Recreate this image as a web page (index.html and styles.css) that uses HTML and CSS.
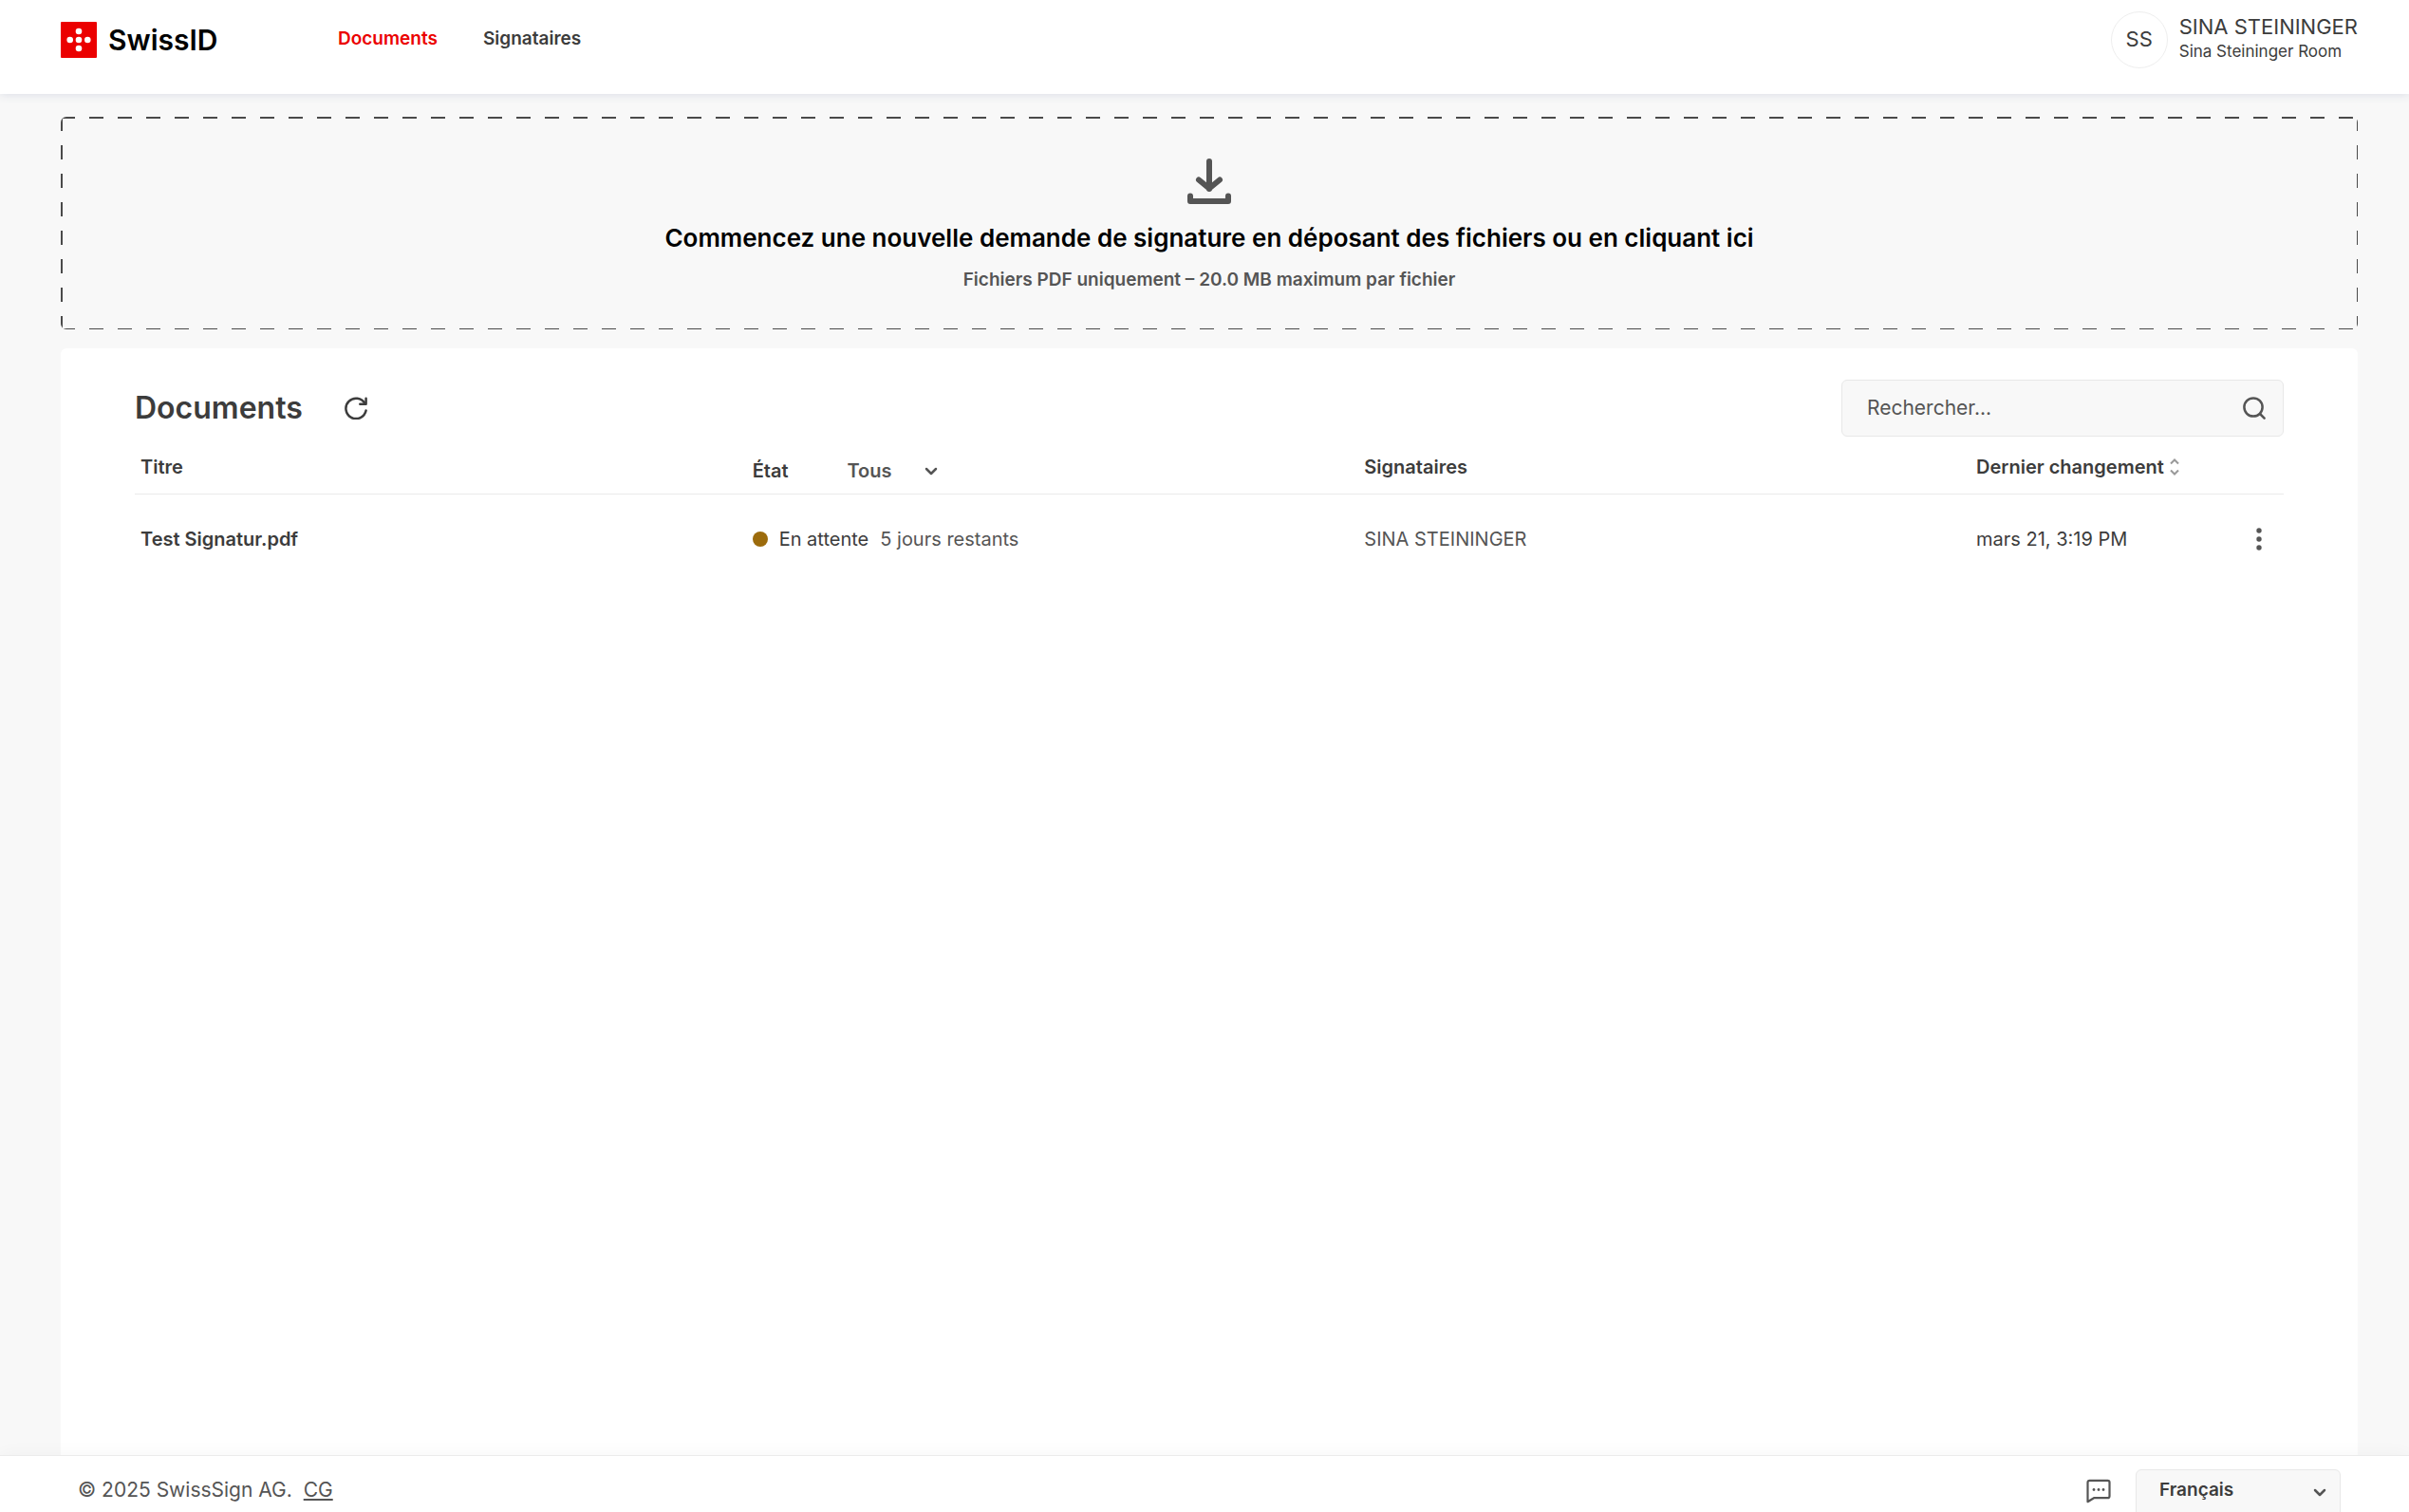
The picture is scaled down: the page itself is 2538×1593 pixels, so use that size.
FILE: index.html
```html
<!DOCTYPE html>
<html lang="fr">
<head>
  <meta charset="UTF-8">
  <meta name="viewport" content="width=device-width, initial-scale=1">
  <title>SwissID Sign</title>
  <link rel="stylesheet" href="styles.css">
</head>
<body>
  <header class="header">
    <a class="logo" href="#">
      <svg width="38" height="38" viewBox="0 0 38 38" aria-hidden="true">
        <rect width="38" height="38" rx="1" fill="#eb0000"/>
        <g fill="#fff">
          <circle cx="19" cy="10" r="3.3"/>
          <circle cx="9.7" cy="19" r="3.3"/>
          <circle cx="19" cy="19" r="3.3"/>
          <circle cx="28.3" cy="19" r="3.3"/>
          <circle cx="19" cy="28" r="3.3"/>
        </g>
      </svg>
      <span>SwissID</span>
    </a>
    <nav class="nav">
      <a class="nav-link active" href="#">Documents</a>
      <a class="nav-link" href="#">Signataires</a>
    </nav>
    <button class="account" type="button">
      <span class="avatar">SS</span>
      <span class="account-text">
        <span class="account-name">SINA STEININGER</span>
        <span class="account-room">Sina Steininger Room</span>
      </span>
    </button>
  </header>

  <main class="main">
    <button class="dropzone" type="button">
      <svg width="46" height="48" viewBox="0 0 46 48" fill="none" stroke="#555" stroke-width="6" stroke-linecap="round" stroke-linejoin="round" aria-hidden="true">
        <path d="M23 3v29"/>
        <path d="M12 22.500l11 9 11-9"/>
        <path d="M3 39.500v5.500h40v-5.500"/>
      </svg>
      <span class="dropzone-title">Commencez une nouvelle demande de signature en déposant des fichiers ou en cliquant ici</span>
      <span class="dropzone-hint">Fichiers PDF uniquement – 20.0 MB maximum par fichier</span>
    </button>

    <section class="card">
      <div class="card-top">
        <h1 class="card-title">Documents</h1>
        <button class="icon-button" type="button" aria-label="Actualiser">
          <svg width="24" height="24" viewBox="0 0 24 24" fill="none" stroke="#3c3c3c" stroke-width="2.500" stroke-linecap="round" stroke-linejoin="round">
            <path d="M22.600 14.500A10.700 10.700 0 1 1 21.500 7.200"/>
            <path d="M22.600 1.800v6h-6.300"/>
          </svg>
        </button>
        <div class="search">
          <input class="search-input" type="search" placeholder="Rechercher..." aria-label="Rechercher">
          <svg width="24" height="24" viewBox="0 0 24 24" fill="none" stroke="#555" stroke-width="2.500" stroke-linecap="round" aria-hidden="true">
            <circle cx="11" cy="11" r="9.600"/>
            <path d="M18 18l4.600 4.600"/>
          </svg>
        </div>
      </div>

      <table class="documents">
        <thead>
          <tr>
            <th>Titre</th>
            <th>
              <div class="status-head">
                <label for="status-filter">État</label>
                <span class="select-box filter">
                  <select id="status-filter">
                    <option>Tous</option>
                  </select>
                  <svg width="14" height="9" viewBox="0 0 14 9" fill="none" stroke="#555" stroke-width="2.500" stroke-linecap="round" stroke-linejoin="round" aria-hidden="true"><path d="M2 2l5 5 5-5"/></svg>
                </span>
              </div>
            </th>
            <th>Signataires</th>
            <th class="last-col">
              <button class="sort" type="button">
                Dernier changement
                <svg width="10" height="18" viewBox="0 0 10 18" fill="none" stroke="#999" stroke-width="2" aria-hidden="true"><path d="M1 5.500l4-4 4 4M1 12.500l4 4 4-4"/></svg>
              </button>
            </th>
          </tr>
        </thead>
        <tbody>
          <tr>
            <td class="doc-name">Test Signatur.pdf</td>
            <td>
              <div class="status">
                <span class="status-dot"></span>
                <span>En attente</span>
                <span class="muted">5 jours restants</span>
              </div>
            </td>
            <td class="muted">SINA STEININGER</td>
            <td>
              <div class="changed">
                <span>mars 21, 3:19 PM</span>
                <button class="icon-button" type="button" aria-label="Actions">
                  <svg width="6" height="24" viewBox="0 0 6 24" fill="#555"><circle cx="3" cy="3" r="2.700"/><circle cx="3" cy="12" r="2.700"/><circle cx="3" cy="21" r="2.700"/></svg>
                </button>
              </div>
            </td>
          </tr>
        </tbody>
      </table>
    </section>
  </main>

  <footer class="footer">
    <p class="copyright">© 2025 SwissSign AG. <a href="#">CG</a></p>
    <button class="icon-button feedback" type="button" aria-label="Feedback">
      <svg width="26" height="26" viewBox="0 0 26 26" fill="none" stroke="#555" stroke-width="2.200" stroke-linejoin="round">
        <path d="M3.500 1.800h19a2 2 0 0 1 2 2v14.400a2 2 0 0 1-2 2H8l-6.500 4V3.800a2 2 0 0 1 2-2z"/>
        <g fill="#555" stroke="none"><circle cx="8" cy="11.500" r="1.400"/><circle cx="13" cy="11.500" r="1.400"/><circle cx="18" cy="11.500" r="1.400"/></g>
      </svg>
    </button>
    <span class="select-box language">
      <select aria-label="Langue">
        <option>Français</option>
      </select>
      <svg width="14" height="9" viewBox="0 0 14 9" fill="none" stroke="#555" stroke-width="2.500" stroke-linecap="round" stroke-linejoin="round" aria-hidden="true"><path d="M2 2l5 5 5-5"/></svg>
    </span>
  </footer>
</body>
</html>
```
FILE: styles.css
```css
* {
  box-sizing: border-box;
}

body {
  margin: 0;
  height: 100vh;
  display: flex;
  flex-direction: column;
  overflow: hidden;
  background: #f8f8f8;
  color: #3c3c3c;
  font-family: Inter, "Open Sans", sans-serif;
  font-size: 20px;
  line-height: 24px;
}

button, input, select {
  font: inherit;
  color: inherit;
  background: none;
  border: 0;
  padding: 0;
  margin: 0;
}

button, select {
  cursor: pointer;
}

svg {
  display: block;
  flex: none;
}

/* header */
.header {
  flex: none;
  height: 99px;
  padding: 12px 54px 0 64px;
  display: flex;
  align-items: flex-start;
  background: white;
  box-shadow: 0 0 10px #d5d8e2;
  z-index: 1;
}

.logo {
  display: flex;
  align-items: center;
  gap: 12px;
  width: 292px;
  height: 60px;
  color: black;
  font-size: 30px;
  font-weight: 600;
  text-decoration: none;
}

.nav {
  display: flex;
  gap: 48px;
  padding-top: 17px;
  font-size: 19px;
}

.nav-link {
  color: inherit;
  font-weight: 600;
  text-decoration: none;
}

.nav-link.active {
  color: #eb0000;
}

.account {
  display: flex;
  align-items: flex-start;
  gap: 12px;
  margin-left: auto;
  text-align: left;
}

.avatar {
  width: 60px;
  height: 60px;
  padding-bottom: 2px;
  display: flex;
  align-items: center;
  justify-content: center;
  border: 1px solid #eee;
  border-radius: 50%;
  font-size: 22px;
}

.account-text {
  display: flex;
  flex-direction: column;
  padding-top: 2px;
}

.account-name {
  font-size: 22px;
  line-height: 28px;
}

.account-room {
  font-size: 17px;
}

/* content */
.main {
  flex: 1;
  min-height: 0;
  padding: 24px 54px 0 64px;
  display: flex;
  flex-direction: column;
  gap: 20px;
}

.dropzone {
  --dash: #4a4a4a 0 15px, transparent 15px 30px;
  flex: none;
  height: 224px;
  padding-top: 4px;
  display: flex;
  flex-direction: column;
  align-items: center;
  justify-content: center;
  border-radius: 6px;
  background:
    repeating-linear-gradient(to right, var(--dash)) top / 100% 2px no-repeat,
    repeating-linear-gradient(to right, var(--dash)) bottom / 100% 1px no-repeat,
    repeating-linear-gradient(to bottom, var(--dash)) left / 2px 100% no-repeat,
    repeating-linear-gradient(to bottom, var(--dash)) right / 1px 100% no-repeat;
}

.dropzone-title {
  margin: 20px 0 16px;
  color: black;
  font-size: 26px;
  font-weight: 600;
  line-height: 32px;
}

.dropzone-hint {
  color: #555;
  font-size: 19px;
  font-weight: 600;
}

.card {
  flex: 1;
  padding: 32px 78px 0;
  border-radius: 6px 6px 0 0;
  background: white;
}

.card-top {
  display: flex;
  align-items: center;
  height: 61px;
}

.card-title {
  margin: 0 44px 0 0;
  font-size: 32px;
  font-weight: 600;
}

.icon-button {
  flex: none;
}

.search {
  width: 466px;
  height: 60px;
  margin-left: auto;
  padding: 0 18px 0 26px;
  display: flex;
  align-items: center;
  border: 1px solid #e8e8e8;
  border-radius: 6px;
  background: #f8f8f8;
}

.search-input {
  flex: 1;
  min-width: 0;
  outline: none;
  font-size: 21px;
}

.search-input::placeholder {
  color: #555;
}

/* documents table */
.documents {
  width: 100%;
  table-layout: fixed;
  border-collapse: collapse;
}

.documents th {
  height: 60px;
  padding: 20px 6px 0;
  border-bottom: 1px solid #ebebeb;
  font-weight: 600;
  text-align: left;
  vertical-align: top;
}

.documents td {
  height: 96px;
  padding: 0 6px;
}

.last-col {
  width: 330px;
}

.status-head {
  display: flex;
  gap: 62px;
  padding-top: 4px;
}

.select-box {
  display: grid;
  align-items: center;
}

.select-box select,
.select-box svg {
  grid-area: 1 / 1;
}

.select-box select {
  appearance: none;
  width: 100%;
  height: 100%;
}

.select-box svg {
  justify-self: end;
  pointer-events: none;
}

.filter {
  width: 96px;
  color: #555;
}

.sort {
  display: flex;
  align-items: center;
  gap: 6px;
  font-weight: 600;
}

.doc-name {
  font-weight: 600;
}

.status {
  display: flex;
  align-items: center;
  gap: 12px;
}

.status-dot {
  width: 16px;
  height: 16px;
  border-radius: 50%;
  background: #9c6b0c;
}

.muted {
  color: #555;
}

.changed {
  display: flex;
  align-items: center;
  justify-content: space-between;
  padding-right: 17px;
}

/* footer */
.footer {
  flex: none;
  height: 60px;
  padding: 14px 72px 0 82px;
  display: flex;
  align-items: flex-start;
  border-top: 1px solid #ebebeb;
  background: white;
  box-shadow: 0 0 20px rgba(0, 0, 0, 0.04);
}

.copyright {
  margin: 0 auto 0 0;
  padding-top: 10px;
  color: #555;
  font-size: 21px;
}

.copyright a {
  margin-left: 6px;
  color: inherit;
}

.feedback {
  margin: 10px 26px 0 0;
}

.language {
  width: 216px;
  height: 60px;
  border: 1px solid #e8e8e8;
  border-radius: 6px;
  background: #f8f8f8;
  font-size: 19px;
  font-weight: 600;
}

.language select {
  padding: 0 24px 16px;
}

.language svg {
  margin: 0 14px 12px 0;
}
```
